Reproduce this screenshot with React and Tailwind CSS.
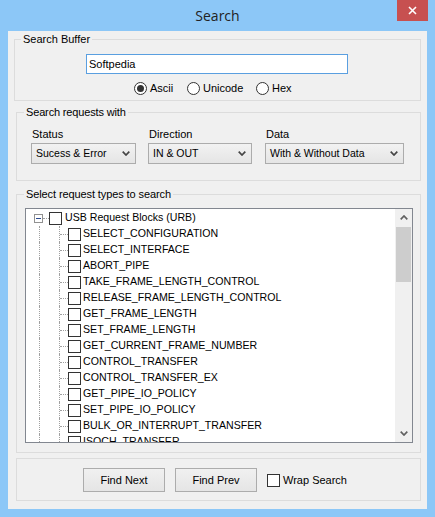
import React from "react";

const items = [
  "SELECT_CONFIGURATION",
  "SELECT_INTERFACE",
  "ABORT_PIPE",
  "TAKE_FRAME_LENGTH_CONTROL",
  "RELEASE_FRAME_LENGTH_CONTROL",
  "GET_FRAME_LENGTH",
  "SET_FRAME_LENGTH",
  "GET_CURRENT_FRAME_NUMBER",
  "CONTROL_TRANSFER",
  "CONTROL_TRANSFER_EX",
  "GET_PIPE_IO_POLICY",
  "SET_PIPE_IO_POLICY",
  "BULK_OR_INTERRUPT_TRANSFER",
  "ISOCH_TRANSFER",
];

function Check() {
  return <div className="h-[13px] w-[13px] shrink-0 border border-[#333333] bg-white" />;
}

function Radio({ checked }) {
  return (
    <div className="flex h-[13px] w-[13px] shrink-0 items-center justify-center rounded-full border border-[#333333] bg-white">
      {checked && <div className="h-[7px] w-[7px] rounded-full bg-[#333333]" />}
    </div>
  );
}

function Chevron({ up, color = "#444444" }) {
  return (
    <svg width="8" height="5" viewBox="0 0 8 5">
      <path
        d={up ? "M0.7 4.3 L4 1 L7.3 4.3" : "M0.7 0.7 L4 4 L7.3 0.7"}
        stroke={color}
        strokeWidth="1.7"
        fill="none"
      />
    </svg>
  );
}

function Combo({ w, text }) {
  return (
    <div
      className={`flex h-[21px] ${w} items-center justify-between border border-[#acacac] bg-gradient-to-b from-[#f2f2f2] to-[#e5e5e5] pl-[4px] pr-[5px] text-[10.5px] text-black`}
    >
      <span>{text}</span>
      <Chevron />
    </div>
  );
}

function ChildRow({ label }) {
  return (
    <div className="flex h-[16px] shrink-0 items-center">
      <div className="w-[13px] shrink-0" />
      <div className="h-full w-[20px] shrink-0 border-l border-dotted border-[#a0a0a0]" />
      <div className="flex h-full w-[9px] shrink-0 items-center border-l border-dotted border-[#a0a0a0]">
        <div className="w-full border-t border-dotted border-[#a0a0a0]" />
      </div>
      <Check />
      <span className="ml-[2px] whitespace-nowrap">{label}</span>
    </div>
  );
}

export default function App() {
  return (
    <div className="flex h-[517px] w-[435px] flex-col bg-[#8cc7f7] font-['Liberation_Sans',Arial,sans-serif] text-[11px] text-black">
      {/* title bar */}
      <div className="relative flex h-[31px] shrink-0 items-center justify-center">
        <span className="font-['Open_Sans','Liberation_Sans',sans-serif] text-[14px] text-[#222222]">Search</span>
        <div className="absolute right-[7px] top-0 flex h-[21px] w-[31px] items-center justify-center bg-[#c75050]">
          <svg width="9" height="9" viewBox="0 0 9 9">
            <path d="M1 1 L8 8 M8 1 L1 8" stroke="white" strokeWidth="1.6" />
          </svg>
        </div>
      </div>

      {/* client */}
      <div className="ml-[8px] flex h-[478px] w-[419px] flex-col bg-[#f0f0f0]">
        {/* Search Buffer */}
        <fieldset className="ml-[6px] mt-[1px] h-[69px] w-[407px] border border-[#dcdcdc]">
          <legend className="ml-[6px] px-[2px] leading-[14px]">Search Buffer</legend>
          <div className="ml-[71px] mt-[8px] flex h-[20px] w-[262px] items-center border border-[#5a9fe0] bg-white pl-[2px]">
            Softpedia
          </div>
          <div className="ml-[119px] mt-[8px] flex h-[13px] items-center">
            <div className="flex w-[53px] items-center">
              <Radio checked />
              <span className="ml-[3px]">Ascii</span>
            </div>
            <div className="flex w-[69px] items-center">
              <Radio />
              <span className="ml-[3px]">Unicode</span>
            </div>
            <div className="flex items-center">
              <Radio />
              <span className="ml-[3px]">Hex</span>
            </div>
          </div>
        </fieldset>

        {/* Search requests with */}
        <fieldset className="ml-[8px] mt-[4px] h-[76px] w-[405px] border border-[#dcdcdc]">
          <legend className="ml-[7px] px-[2px] leading-[14px] tracking-[-0.15px]">Search requests with</legend>
          <div className="mt-[8px] flex pl-[14px]">
            <div className="flex w-[105px] flex-col">
              <span className="pl-[1px] leading-[14px]">Status</span>
              <div className="mt-[2px]">
                <Combo w="w-[105px]" text="Sucess & Error" />
              </div>
            </div>
            <div className="ml-[12px] flex w-[104px] flex-col">
              <span className="pl-[1px] leading-[14px]">Direction</span>
              <div className="mt-[2px]">
                <Combo w="w-[104px]" text="IN & OUT" />
              </div>
            </div>
            <div className="ml-[13px] flex w-[139px] flex-col">
              <span className="pl-[1px] leading-[14px]">Data</span>
              <div className="mt-[2px]">
                <Combo w="w-[139px]" text="With & Without Data" />
              </div>
            </div>
          </div>
        </fieldset>

        {/* Select request types */}
        <fieldset className="ml-[8px] mt-[6px] h-[266px] w-[405px] border border-[#dcdcdc]">
          <legend className="ml-[7px] px-[2px] leading-[14px] tracking-[-0.1px]">Select request types to search</legend>
          <div className="ml-[8px] mt-[7px] flex h-[235px] w-[388px] overflow-hidden border border-[#828790] bg-white">
            <div className="flex min-w-0 flex-1 flex-col overflow-hidden pt-[1px] text-[10.6px]">
              <div className="flex h-[16px] shrink-0 items-center">
                <div className="w-[8px] shrink-0" />
                <div className="flex h-[9px] w-[9px] shrink-0 items-center justify-center border border-[#919191] bg-white">
                  <div className="h-[1px] w-[5px] bg-[#2a4a90]" />
                </div>
                <div className="w-[6px] shrink-0 border-t border-dotted border-[#a0a0a0]" />
                <Check />
                <span className="ml-[3px] whitespace-nowrap">USB Request Blocks (URB)</span>
              </div>
              {items.map((t) => (
                <ChildRow key={t} label={t} />
              ))}
            </div>
            <div className="flex w-[17px] shrink-0 flex-col bg-[#f0f0f0]">
              <div className="flex h-[17px] items-center justify-center">
                <Chevron up color="#606060" />
              </div>
              <div className="mx-[1px] mt-[1px] h-[55px] bg-[#cdcdcd]" />
              <div className="flex-1" />
              <div className="flex h-[17px] items-center justify-center">
                <Chevron color="#606060" />
              </div>
            </div>
          </div>
        </fieldset>

        {/* buttons */}
        <div className="ml-[8px] mt-[5px] flex h-[43px] w-[405px] items-start border border-[#dcdcdc] pl-[66px] pt-[9px]">
          <div className="flex h-[24px] w-[82px] items-center justify-center border border-[#acacac] bg-gradient-to-b from-[#f0f0f0] to-[#e5e5e5]">
            Find Next
          </div>
          <div className="ml-[10px] flex h-[24px] w-[82px] items-center justify-center border border-[#acacac] bg-gradient-to-b from-[#f0f0f0] to-[#e5e5e5]">
            Find Prev
          </div>
          <div className="ml-[10px] flex h-[24px] items-center">
            <Check />
            <span className="ml-[3px]">Wrap Search</span>
          </div>
        </div>
      </div>
    </div>
  );
}
